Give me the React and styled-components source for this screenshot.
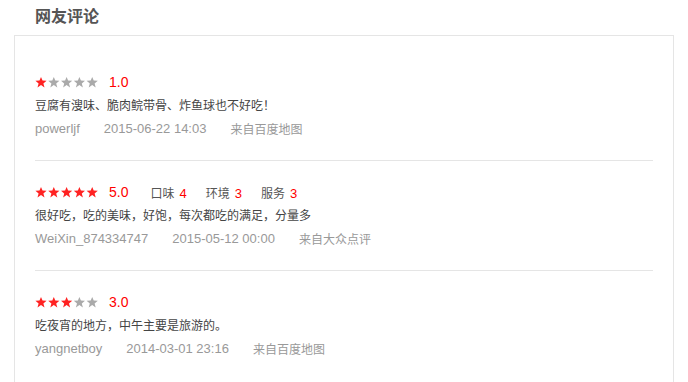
import React from 'react'
import styled, { createGlobalStyle } from 'styled-components'

const GlobalStyle = createGlobalStyle`
  body {
    margin: 0;
    background: #fff;
    font-family: "Liberation Sans", "Noto Sans CJK SC", sans-serif;
  }
`

const Page = styled.div`
  padding: 0 14px;
`

const Title = styled.h2`
  margin: 0 0 5px;
  padding-left: 21px;
  height: 30px;
  line-height: 30px;
  font-size: 16px;
  font-weight: bold;
  color: #555;
  font-family: "Noto Sans CJK SC", sans-serif;
`

const Box = styled.div`
  border: 1px solid #e5e5e5;
  padding: 15px 20px 15px;
`

const Item = styled.div`
  padding: 20px 0 19px;
  border-bottom: 1px solid #e5e5e5;

  &:last-child {
    border-bottom-color: transparent;
  }
`

const RateRow = styled.div`
  display: flex;
  align-items: center;
  height: 22px;
`

const Score = styled.span`
  margin-left: 10px;
  font-size: 14px;
  color: #f00;
`

const Sub = styled.span`
  margin-left: ${p => (p.first ? '22px' : '19px')};
  font-size: 12px;
  color: #555;
  font-family: "Noto Sans CJK SC", sans-serif;

  b {
    font-weight: normal;
    margin-left: 5px;
    color: #f00;
    font-family: "Liberation Sans", sans-serif;
    font-size: 13px;
  }
`

const Text = styled.div`
  height: 24px;
  line-height: 24px;
  font-size: 12px;
  color: #444;
  font-family: "Noto Sans CJK SC", sans-serif;
`

const Meta = styled.div`
  display: flex;
  height: 24px;
  line-height: 24px;
  color: #999;
  gap: 24px;
`

const Latin = styled.span`
  font-size: 13px;
`

const Source = styled.span`
  font-size: 12px;
  font-family: "Noto Sans CJK SC", sans-serif;
`

const starPath = 'M6 0.4 L7.5 4.1 L11.6 4.3 L8.4 6.9 L9.5 10.9 L6 8.6 L2.5 10.9 L3.6 6.9 L0.4 4.3 L4.5 4.1 Z'

const Stars = ({ n }) => (
  <svg width="64" height="12" viewBox="0 0 64 12">
    {[0, 1, 2, 3, 4].map(i => (
      <path
        key={i}
        d={starPath}
        transform={`translate(${i * 12.8} 0.5)`}
        fill={i < n ? '#f22' : '#aaa'}
      />
    ))}
  </svg>
)

const reviews = [
  {
    stars: 1,
    score: '1.0',
    text: '豆腐有溲味、脆肉鲩带骨、炸鱼球也不好吃！',
    user: 'powerljf',
    date: '2015-06-22 14:03',
    from: '来自百度地图'
  },
  {
    stars: 5,
    score: '5.0',
    subs: [['口味', 4], ['环境', 3], ['服务', 3]],
    text: '很好吃，吃的美味，好饱，每次都吃的满足，分量多',
    user: 'WeiXin_874334747',
    date: '2015-05-12 00:00',
    from: '来自大众点评'
  },
  {
    stars: 3,
    score: '3.0',
    text: '吃夜宵的地方，中午主要是旅游的。',
    user: 'yangnetboy',
    date: '2014-03-01 23:16',
    from: '来自百度地图'
  }
]

export default function App() {
  return (
    <Page>
      <GlobalStyle />
      <Title>网友评论</Title>
      <Box>
        {reviews.map((r, i) => (
          <Item key={i}>
            <RateRow>
              <Stars n={r.stars} />
              <Score>{r.score}</Score>
              {r.subs && r.subs.map(([label, v], j) => (
                <Sub key={label} first={j === 0}>
                  {label}<b>{v}</b>
                </Sub>
              ))}
            </RateRow>
            <Text>{r.text}</Text>
            <Meta>
              <Latin>{r.user}</Latin>
              <Latin>{r.date}</Latin>
              <Source>{r.from}</Source>
            </Meta>
          </Item>
        ))}
      </Box>
    </Page>
  )
}
